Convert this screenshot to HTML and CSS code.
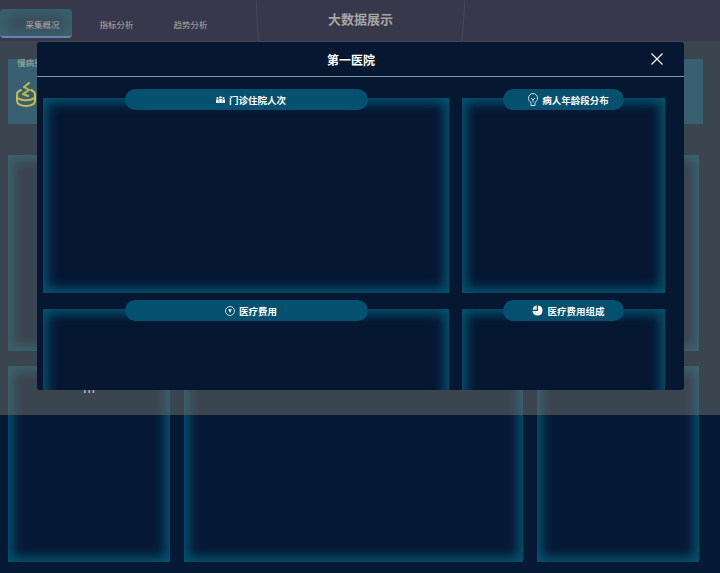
FILE: index.html
```html
<!DOCTYPE html>
<html lang="en">
<head>
    <meta charset="UTF-8">
    <meta name="viewport" content="width=device-width, initial-scale=1.0">
    <title>大数据展示</title>
    <link rel="stylesheet" href="styles.css">
</head>
<body>
    <div class="page">
        <header class="topbar">
            <nav class="tabs">
                <a class="tab active">采集概况</a>
                <a class="tab">指标分析</a>
                <a class="tab">趋势分析</a>
            </nav>
            <div class="site-title">
                <svg class="title-frame" width="209" height="42" viewBox="0 0 209 42" fill="none">
                    <path d="M0 0 L2.500 41.500 H206 L209 0" stroke="#112848" stroke-width="1"/>
                </svg>
                大数据展示
            </div>
        </header>

        <main class="dashboard">
            <section class="summary">
                <span class="summary-label">慢病患者</span>
                <svg class="summary-icon" width="20" height="25" viewBox="0 0 20 25" fill="none" stroke="#fbf036" stroke-width="2" stroke-linecap="round" stroke-linejoin="round">
                    <path d="M5 8 C2.500 9 1 10 1 12 V19 C1 22 5 24 10 24 C15 24 19 22 19 19 V12 C19 10 17.500 9 15 8"/>
                    <path d="M1 15.500 C5 19 15 19 19 15.500"/>
                    <path d="M13 1 L8 5 L13 8 L7 12 L12 14"/>
                </svg>
            </section>
            <div class="card-row">
                <div class="glow-card"></div>
                <div class="glow-card"></div>
                <div class="glow-card"></div>
            </div>
            <div class="card-row">
                <div class="glow-card"><span class="card-caption">m</span></div>
                <div class="glow-card"></div>
                <div class="glow-card"></div>
            </div>
        </main>
    </div>

    <div class="overlay"></div>

    <div class="modal">
        <div class="modal-header">
            <h2>第一医院</h2>
            <svg class="modal-close" width="12" height="12" viewBox="0 0 12 12" stroke="#ffffff" stroke-width="1.100">
                <path d="M0.500 0.500 L11.500 11.500 M11.500 0.500 L0.500 11.500"/>
            </svg>
        </div>
        <div class="modal-body">
            <div class="panel">
                <div class="panel-title wide">
                    <svg width="9" height="7" viewBox="0 0 9 7" fill="#ffffff">
                        <circle cx="1.500" cy="2" r="1.100"/>
                        <circle cx="4.500" cy="1.400" r="1.200"/>
                        <circle cx="7.500" cy="2" r="1.100"/>
                        <path d="M0 7 V3.600 H2.700 V7 Z M3.200 7 V3 H5.800 V7 Z M6.300 7 V3.600 H9 V7 Z"/>
                    </svg>
                    门诊住院人次
                </div>
            </div>
            <div class="panel">
                <div class="panel-title narrow">
                    <svg width="10" height="13" viewBox="0 0 10 13" fill="none" stroke="#ffffff" stroke-width="0.800">
                        <path d="M3 9.500 C1.500 8.600 0.500 7.200 0.500 5 C0.500 2.500 2.500 0.500 5 0.500 C7.500 0.500 9.500 2.500 9.500 5 C9.500 7.200 8.500 8.600 7 9.500 V12.500 H3 Z"/>
                        <path d="M3 5 L5 7 L7 5 M5 7 V9.500"/>
                    </svg>
                    病人年龄段分布
                </div>
            </div>
            <div class="panel">
                <div class="panel-title wide">
                    <svg width="10" height="10" viewBox="0 0 10 10" fill="none" stroke="#ffffff" stroke-width="0.800">
                        <circle cx="5" cy="5" r="4.500"/>
                        <path d="M3.200 3.200 H6.800 L5 7 Z" fill="#ffffff" stroke="none"/>
                    </svg>
                    医疗费用
                </div>
            </div>
            <div class="panel">
                <div class="panel-title narrow">
                    <svg width="11" height="11" viewBox="0 0 11 11" fill="#ffffff">
                        <path d="M6 0.500 A5 5 0 1 1 0.500 6 H6 Z"/>
                        <path d="M4.800 0.600 V4.800 H0.600 A4.500 4.500 0 0 1 4.800 0.600 Z" opacity="0.850"/>
                    </svg>
                    医疗费用组成
                </div>
            </div>
        </div>
    </div>
</body>
</html>
```

FILE: styles.css
```css
/* General Styling */
* {
    margin: 0;
    padding: 0;
    box-sizing: border-box;
}

html, body {
    height: 100%;
}

body {
    position: relative;
    overflow: hidden;
    background-color: #071a35;
    font-family: "Liberation Sans", "Noto Sans CJK SC", sans-serif;
}

.page {
    display: flex;
    flex-direction: column;
    height: 573px;
}

/* Top Bar Styling */
.topbar {
    display: grid;
    grid-template-columns: 256px 209px 1fr;
    height: 42px;
    background-color: #00022e;
}

.tabs {
    display: flex;
    padding-top: 9px;
}

.tab {
    width: 74px;
    height: 29px;
    padding-left: 11px;
    line-height: 32px;
    text-align: center;
    font-size: 8.500px;
    color: #d0d0d0;
}

.tab.active {
    width: 72px;
    margin-right: 2px;
    padding-left: 13px;
    border-radius: 4px;
    border-bottom: 2px solid #5b8be0;
    background-color: #03173d;
    box-shadow: inset 0 0 14px 7px #02506a;
}

.site-title {
    position: relative;
    text-align: center;
    line-height: 39px;
    font-size: 13px;
    font-weight: bold;
    color: #c8c8c8;
}

.title-frame {
    position: absolute;
    top: 0;
    left: 0;
}

/* Dashboard Styling */
.dashboard {
    flex: 1;
    display: flex;
    flex-direction: column;
    padding: 18px 21px 11px 8px;
}

.summary {
    display: flex;
    flex-direction: column;
    align-items: flex-start;
    height: 65px;
    margin-right: -4px;
    padding: 0 0 0 9px;
    background-color: #004c71;
}

.summary-label {
    font-size: 8.500px;
    line-height: 10px;
    margin-top: -1px;
    color: #d0d0d0;
}

.summary-icon {
    margin: 14px 0 0 -1px;
}

.card-row {
    display: grid;
    grid-template-columns: 162px 1fr 162px;
    column-gap: 14px;
    height: 196px;
    margin-top: 15px;
}

.summary + .card-row {
    margin-top: 31px;
}

.glow-card {
    text-align: center;
    box-shadow: inset 0 0 11px 5px #03536f;
}

.card-caption {
    display: block;
    padding-top: 15px;
    font-size: 14px;
    line-height: 15px;
    color: #ffffff;
}

/* Overlay */
.overlay {
    position: absolute;
    top: 0;
    left: 0;
    width: 100%;
    height: 415px;
    background-color: rgba(125, 122, 112, 0.45);
}

/* Modal Styling */
.modal {
    position: absolute;
    top: 42px;
    left: 37px;
    width: 647px;
    height: 348px;
    overflow: hidden;
    border-radius: 3px;
    background-color: #061732;
}

.modal-header {
    display: flex;
    align-items: center;
    justify-content: center;
    position: relative;
    height: 35px;
    padding-right: 19px;
    border-bottom: 1px solid #8b95a0;
}

.modal-header h2 {
    font-size: 12px;
    color: #ffffff;
}

.modal-close {
    position: absolute;
    top: 11px;
    right: 21px;
}

.modal-body {
    display: grid;
    grid-template-columns: 406px 203px;
    grid-auto-rows: 195px;
    column-gap: 13px;
    row-gap: 16px;
    padding: 21px 0 0 6px;
}

.panel {
    position: relative;
    display: flex;
    justify-content: center;
    box-shadow: inset 0 0 11px 5px #03536f;
}

.panel-title {
    position: absolute;
    top: -9px;
    display: flex;
    align-items: center;
    justify-content: center;
    gap: 4px;
    height: 21px;
    padding-left: 10px;
    border-radius: 11px;
    background-color: #03506f;
    font-size: 9.500px;
    font-weight: bold;
    color: #ffffff;
}

.panel-title.wide {
    width: 243px;
}

.panel-title.narrow {
    width: 121px;
}
```
